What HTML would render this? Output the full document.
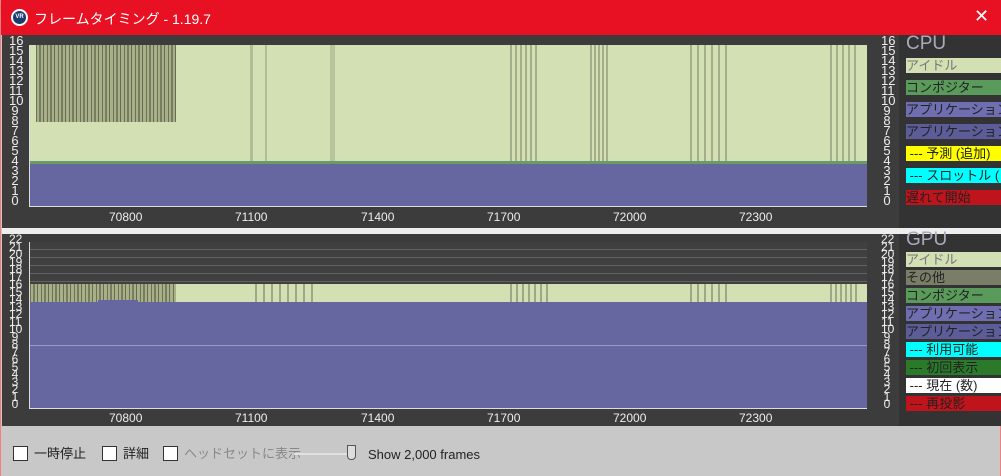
<!DOCTYPE html>
<html><head><meta charset="utf-8"><style>
*{margin:0;padding:0;box-sizing:border-box}
body{width:1001px;height:476px;overflow:hidden;background:#c8c8c8;font-family:"Liberation Sans","Noto Sans CJK JP",sans-serif;position:relative;border-left:1px solid #f08080;border-right:1px solid #f08080}
.abs{position:absolute}
#title{left:0;top:0;width:1001px;height:35px;background:#e81123;color:#fff;font-size:14px}
.panel{left:1px;width:999px;background:#3c3c3c}
.plot{overflow:hidden}
.lab{color:#eee;font-size:12px}
.leg{left:905px;width:96px;height:15px;font-size:13px;line-height:15px;white-space:nowrap;overflow:hidden;color:#222}
.cb{width:15px;height:15px;background:#fff;border:1px solid #333;top:446px}
.bt{top:445px;font-size:13px;line-height:17px;color:#222}
.stripes{background:
repeating-linear-gradient(90deg,rgba(60,60,50,.55) 0 1px,transparent 1px 3px,rgba(60,60,50,.45) 3px 5px,transparent 5px 7px,rgba(60,60,50,.6) 7px 8px,transparent 8px 11px),#a8b088}
</style></head><body>
<div id="title" class="abs">
 <div class="abs" style="left:10px;top:9px;width:17px;height:17px;border-radius:50%;background:#1d3c6e;border:2px solid #fff;color:#fff;font-size:6px;line-height:13px;text-align:center;font-weight:bold">VR</div>
 <div class="abs" style="left:33px;top:9px">フレームタイミング - 1.19.7</div>
 <div class="abs" style="left:973px;top:6px;font-size:18px">✕</div>
</div>
<!-- CPU panel -->
<div class="abs panel" style="top:35px;height:193px"></div>
<div class="abs" style="left:898px;top:35px;width:102px;height:193px;background:#333"></div>
<div class="abs plot" style="left:29px;top:45px;width:837px;height:161px;background:#d3e0b4">
 <div class="abs stripes" style="left:6px;top:0;width:140px;height:77px"></div>
 <div class="abs" style="left:220px;top:0;width:3px;height:120px;background:rgba(80,80,60,.25)"></div>
 <div class="abs" style="left:235px;top:0;width:2px;height:120px;background:rgba(80,80,60,.25)"></div>
 <div class="abs" style="left:300px;top:0;width:5px;height:120px;background:rgba(80,80,60,.2)"></div>
 <div class="abs" style="left:480px;top:0;width:30px;height:120px;background:repeating-linear-gradient(90deg,rgba(80,80,60,.35) 0 2px,transparent 2px 5px)"></div>
 <div class="abs" style="left:560px;top:0;width:20px;height:120px;background:repeating-linear-gradient(90deg,rgba(80,80,60,.35) 0 2px,transparent 2px 4px)"></div>
 <div class="abs" style="left:660px;top:0;width:40px;height:120px;background:repeating-linear-gradient(90deg,rgba(80,80,60,.35) 0 2px,transparent 2px 7px)"></div>
 <div class="abs" style="left:800px;top:0;width:30px;height:120px;background:repeating-linear-gradient(90deg,rgba(80,80,60,.35) 0 2px,transparent 2px 6px)"></div>
 <div class="abs" style="left:0;top:116px;width:837px;height:5px;background:#6a9a6a"></div>
 <div class="abs" style="left:0;top:119px;width:837px;height:42px;background:#6666a0"></div>
</div>
<div class="abs" style="left:28px;top:45px;width:1px;height:162px;background:#ddd"></div>
<div class="abs" style="left:28px;top:206px;width:838px;height:1px;background:#ddd"></div>
<div class="abs lab" style="left:8px;top:36px;line-height:10px;font-size:13px;width:12px;text-align:center">16<br>15<br>14<br>13<br>12<br>11<br>10<br>9<br>8<br>7<br>6<br>5<br>4<br>3<br>2<br>1<br>0</div>
<div class="abs lab" style="left:880px;top:36px;line-height:10px;font-size:13px;width:12px;text-align:center">16<br>15<br>14<br>13<br>12<br>11<br>10<br>9<br>8<br>7<br>6<br>5<br>4<br>3<br>2<br>1<br>0</div>
<div class="abs lab" style="left:108px;top:210px">70800</div>
<div class="abs lab" style="left:234px;top:210px">71100</div>
<div class="abs lab" style="left:360px;top:210px">71400</div>
<div class="abs lab" style="left:486px;top:210px">71700</div>
<div class="abs lab" style="left:612px;top:210px">72000</div>
<div class="abs lab" style="left:738px;top:210px">72300</div>
<div class="abs" style="left:905px;top:33px;color:#aab;font-size:19px">CPU</div>
<div class="abs leg" style="top:58px;background:#d3e0b4;color:#777">アイドル</div>
<div class="abs leg" style="top:80px;background:#5a9a5a">コンポジター</div>
<div class="abs leg" style="top:102px;background:#6e6eb0">アプリケーション(ホ</div>
<div class="abs leg" style="top:124px;background:#5c5c98">アプリケーション(背</div>
<div class="abs leg" style="top:146px;background:#ff0">&nbsp;--- 予測 (追加)</div>
<div class="abs leg" style="top:168px;background:#0ff">&nbsp;--- スロットル (フレ</div>
<div class="abs leg" style="top:190px;background:#c0141c">遅れて開始</div>
<!-- separator -->
<div class="abs" style="left:1px;top:228px;width:999px;height:6px;background:#eee"></div>
<!-- GPU -->
<div class="abs panel" style="top:234px;height:192px"></div>
<div class="abs" style="left:898px;top:234px;width:102px;height:192px;background:#333"></div>
<div class="abs plot" style="left:29px;top:242px;width:837px;height:166px;background:repeating-linear-gradient(180deg,transparent 0 7px,rgba(200,200,200,.25) 7px 8px),#404040">
 <div class="abs stripes" style="left:0;top:42px;width:146px;height:20px"></div>
 <div class="abs" style="left:146px;top:42px;width:691px;height:20px;background:#d3e0b4"></div>
 <div class="abs" style="left:225px;top:42px;width:60px;height:20px;background:repeating-linear-gradient(90deg,rgba(60,60,50,.35) 0 2px,transparent 2px 8px)"></div>
 <div class="abs" style="left:480px;top:42px;width:40px;height:20px;background:repeating-linear-gradient(90deg,rgba(60,60,50,.35) 0 2px,transparent 2px 6px)"></div>
 <div class="abs" style="left:660px;top:42px;width:40px;height:20px;background:repeating-linear-gradient(90deg,rgba(60,60,50,.35) 0 2px,transparent 2px 7px)"></div>
 <div class="abs" style="left:800px;top:42px;width:30px;height:20px;background:repeating-linear-gradient(90deg,rgba(60,60,50,.35) 0 2px,transparent 2px 5px)"></div>
 <div class="abs" style="left:0;top:60px;width:837px;height:106px;background:#6666a0"></div>
 <div class="abs" style="left:68px;top:58px;width:40px;height:4px;background:#6666a0"></div>
 <div class="abs" style="left:0;top:103px;width:837px;height:1px;background:#9a9ac4"></div>
</div>
<div class="abs" style="left:28px;top:242px;width:1px;height:167px;background:#ddd"></div>
<div class="abs" style="left:28px;top:408px;width:838px;height:1px;background:#ddd"></div>
<div class="abs lab" style="left:8px;top:236px;line-height:7.5px;font-size:12px;width:12px;text-align:center">22<br>21<br>20<br>19<br>18<br>17<br>16<br>15<br>14<br>13<br>12<br>11<br>10<br>9<br>8<br>7<br>6<br>5<br>4<br>3<br>2<br>1<br>0</div>
<div class="abs lab" style="left:880px;top:236px;line-height:7.5px;font-size:12px;width:12px;text-align:center">22<br>21<br>20<br>19<br>18<br>17<br>16<br>15<br>14<br>13<br>12<br>11<br>10<br>9<br>8<br>7<br>6<br>5<br>4<br>3<br>2<br>1<br>0</div>
<div class="abs lab" style="left:108px;top:411px">70800</div>
<div class="abs lab" style="left:234px;top:411px">71100</div>
<div class="abs lab" style="left:360px;top:411px">71400</div>
<div class="abs lab" style="left:486px;top:411px">71700</div>
<div class="abs lab" style="left:612px;top:411px">72000</div>
<div class="abs lab" style="left:738px;top:411px">72300</div>
<div class="abs" style="left:905px;top:229px;color:#aab;font-size:19px">GPU</div>
<div class="abs leg" style="top:252px;background:#d3e0b4;color:#777">アイドル</div>
<div class="abs leg" style="top:270px;background:#7a7e68">その他</div>
<div class="abs leg" style="top:288px;background:#5a9a5a">コンポジター</div>
<div class="abs leg" style="top:306px;background:#6e6eb0">アプリケーション(ホ</div>
<div class="abs leg" style="top:324px;background:#5c5c98">アプリケーション(背</div>
<div class="abs leg" style="top:342px;background:#0ff">&nbsp;--- 利用可能</div>
<div class="abs leg" style="top:360px;background:#2a7a2a">&nbsp;--- 初回表示</div>
<div class="abs leg" style="top:378px;background:#fff">&nbsp;--- 現在 (数)</div>
<div class="abs leg" style="top:396px;background:#c0141c">&nbsp;--- 再投影</div>
<!-- bottom -->
<div class="abs cb" style="left:12px"></div><div class="abs bt" style="left:33px">一時停止</div>
<div class="abs cb" style="left:101px"></div><div class="abs bt" style="left:122px">詳細</div>
<div class="abs cb" style="left:162px"></div><div class="abs bt" style="left:183px;color:#888">ヘッドセットに表示</div>
<div class="abs" style="left:293px;top:453px;width:60px;height:2px;background:#e0e0e0"></div>
<div class="abs" style="left:346px;top:445px;width:9px;height:15px;background:#ddd;border:1px solid #555;border-radius:0 0 4px 4px"></div>
<div class="abs bt" style="left:367px;top:446px">Show 2,000 frames</div>
</body></html>
